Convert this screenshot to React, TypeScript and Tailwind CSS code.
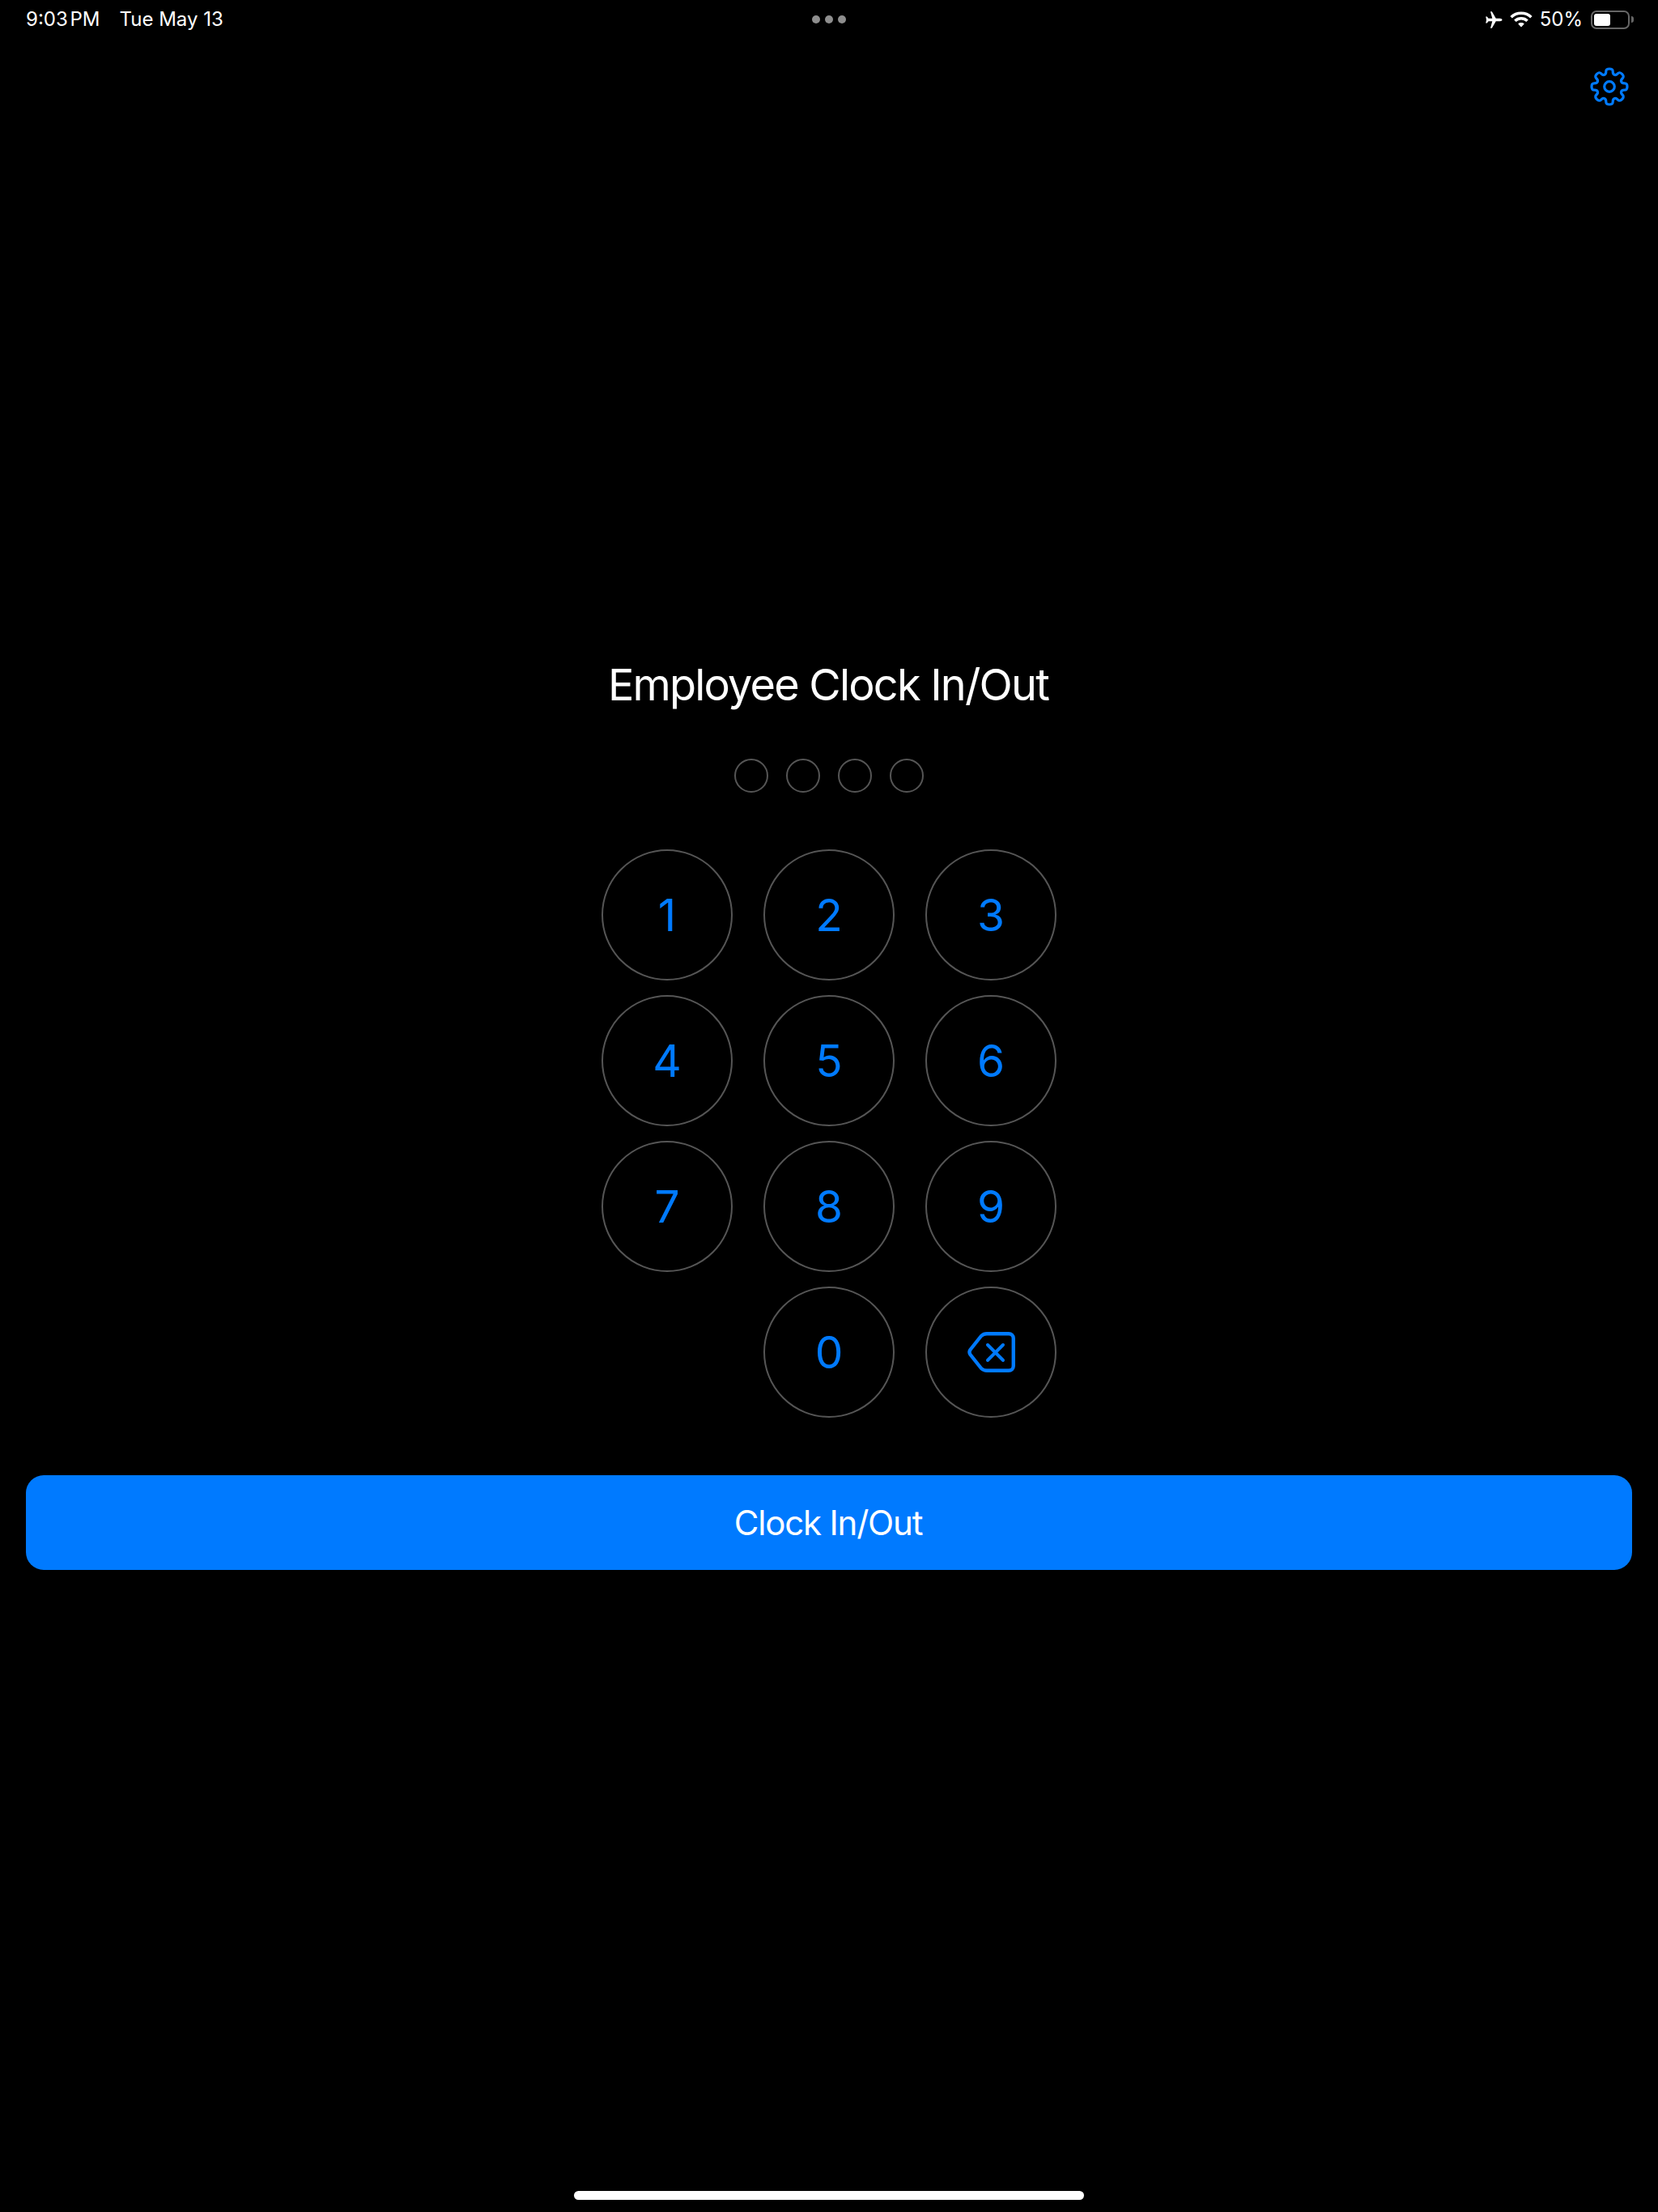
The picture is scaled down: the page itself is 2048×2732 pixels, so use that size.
import React from "react";

const Key = ({ children }: { children: React.ReactNode }) => (
  <button className="flex h-[162px] w-[162px] items-center justify-center rounded-full border-2 border-[#555555] text-[55px] leading-none text-[#007aff]">
    {children}
  </button>
);

const Airplane = () => (
  <svg width="22" height="21" viewBox="0 0 22 21" fill="#fff">
    <path d="M21.5 10.5c0 1-1.2 1.7-2.8 1.7h-4.9L9 20.4c-.2.3-.4.4-.7.4H7l2.3-8.6H4.6L3 14.3c-.1.2-.3.3-.5.3H1.2l.9-4.1-.9-4.1h1.3c.2 0 .4.1.5.3l1.6 2.1h4.7L7 .2h1.3c.3 0 .5.1.7.4l4.8 8.2h4.9c1.6 0 2.8.7 2.8 1.7z" />
  </svg>
);

const Wifi = () => (
  <svg width="28" height="20" viewBox="0 0 28 20" fill="none" stroke="#fff" strokeWidth="3.6">
    <path d="M1.6 7.2C8.4 .6 19.6 .6 26.4 7.2" />
    <path d="M6.4 11.8c4.2-4 11-4 15.2 0" />
    <path d="M14 19.6l-3.8-4.1c2.1-1.9 5.5-1.9 7.6 0z" fill="#fff" stroke="none" />
  </svg>
);

const Backspace = () => (
  <svg width="59" height="50" viewBox="0 0 59 50" fill="none" stroke="#007aff" strokeWidth="4.4" strokeLinecap="round" strokeLinejoin="round">
    <path d="M24 2.2H51a5.8 5.8 0 0 1 5.8 5.8V42a5.8 5.8 0 0 1-5.8 5.8H24Q20 47.8 17 45L3.5 28Q1.5 25 3.5 22L17 5Q20 2.2 24 2.2Z" />
    <path d="M25 16L44 35M44 16L25 35" strokeWidth="4" />
  </svg>
);

function gearPath(): string {
  const cx = 27;
  const cy = 27;
  const rTip = 22.4;
  const rRoot = 16;
  const pts: [number, number][] = [];
  for (let i = 0; i < 8; i++) {
    const a = (i * Math.PI) / 4 - Math.PI / 2;
    const th1 = (11 * Math.PI) / 180;
    const th2 = (15 * Math.PI) / 180;
    pts.push([cx + rRoot * Math.cos(a - th2), cy + rRoot * Math.sin(a - th2)]);
    pts.push([cx + rTip * Math.cos(a - th1), cy + rTip * Math.sin(a - th1)]);
    pts.push([cx + rTip * Math.cos(a + th1), cy + rTip * Math.sin(a + th1)]);
    pts.push([cx + rRoot * Math.cos(a + th2), cy + rRoot * Math.sin(a + th2)]);
  }
  const mid = (p: [number, number], q: [number, number]) => [(p[0] + q[0]) / 2, (p[1] + q[1]) / 2];
  const start = mid(pts[pts.length - 1], pts[0]);
  let d = `M${start[0].toFixed(2)} ${start[1].toFixed(2)}`;
  pts.forEach((p, i) => {
    const m = mid(p, pts[(i + 1) % pts.length]);
    d += `Q${p[0].toFixed(2)} ${p[1].toFixed(2)} ${m[0].toFixed(2)} ${m[1].toFixed(2)}`;
  });
  return d + "Z";
}

const Gear = () => (
  <svg width="54" height="54" viewBox="0 0 54 54" fill="none" stroke="#007aff" strokeWidth="3.2" strokeLinecap="round" strokeLinejoin="round">
    <path d={gearPath()} />
    <circle cx="27" cy="27" r="6.3" />
  </svg>
);

export default function App() {
  return (
    <div className="flex h-[2732px] w-[2048px] flex-col bg-black font-['Inter',sans-serif] text-white">
      <div className="relative flex h-[48px] items-center justify-between pl-[32px] pr-[30px] text-[24px] leading-none">
        <div className="flex gap-[24px]">
          <span className="[word-spacing:-4px]">9:03 PM</span>
          <span>Tue May 13</span>
        </div>
        <div className="absolute left-[1003px] top-[19px] flex gap-[6px]">
          <span className="h-[10px] w-[10px] rounded-full bg-[#8e8e8e]" />
          <span className="h-[10px] w-[10px] rounded-full bg-[#8e8e8e]" />
          <span className="h-[10px] w-[10px] rounded-full bg-[#8e8e8e]" />
        </div>
        <div className="flex items-center">
          <Airplane />
          <span className="ml-[9px]"><Wifi /></span>
          <span className="ml-[9px]">50%</span>
          <div className="ml-[10px] flex items-center">
            <div className="flex h-[23px] w-[48px] items-center rounded-[7px] border-2 border-[#666666] pl-[2px]">
              <div className="h-[15px] w-[20px] rounded-[3px] bg-white" />
            </div>
            <div className="ml-[2px] h-[8px] w-[3px] rounded-r-full bg-[#666666]" />
          </div>
        </div>
      </div>

      <div className="flex justify-end pr-[33px] pt-[32px]">
        <Gear />
      </div>

      <div className="mt-[679px] flex flex-col items-center">
        <h1 className="pr-[2px] text-[54px] font-normal leading-[66px] tracking-[-1.8px]">Employee Clock In/Out</h1>
        <div className="mt-[58px] flex gap-[22px]">
          {[0, 1, 2, 3].map((i) => (
            <span key={i} className="h-[42px] w-[42px] rounded-full border-2 border-[#555555]" />
          ))}
        </div>
        <div className="mt-[70px] grid grid-cols-[162px_162px_162px] gap-x-[38px] gap-y-[18px]">
          {[1, 2, 3, 4, 5, 6, 7, 8, 9].map((n) => (
            <Key key={n}>{n}</Key>
          ))}
          <div />
          <Key>0</Key>
          <Key><Backspace /></Key>
        </div>
      </div>

      <button className="mx-[32px] mt-[71px] flex h-[117px] items-center justify-center rounded-[22px] bg-[#007aff] pr-[2px] text-[42px] leading-none tracking-[-1.2px] text-white">
        Clock In/Out
      </button>

      <div className="mx-auto mb-[15px] mt-auto h-[11px] w-[630px] rounded-full bg-white" />
    </div>
  );
}
